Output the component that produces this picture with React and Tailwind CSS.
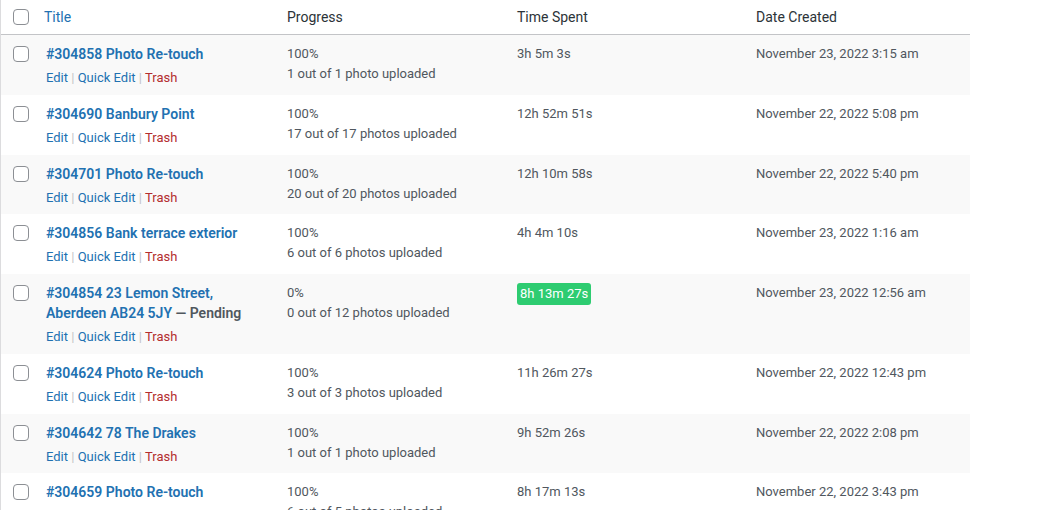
import React from 'react';

const rows = [
  { id: '#304858', title: 'Photo Re-touch', pct: '100%', photos: '1 out of 1 photo uploaded', time: '3h 5m 3s', date: 'November 23, 2022 3:15 am' },
  { id: '#304690', title: 'Banbury Point', pct: '100%', photos: '17 out of 17 photos uploaded', time: '12h 52m 51s', date: 'November 22, 2022 5:08 pm' },
  { id: '#304701', title: 'Photo Re-touch', pct: '100%', photos: '20 out of 20 photos uploaded', time: '12h 10m 58s', date: 'November 22, 2022 5:40 pm' },
  { id: '#304856', title: 'Bank terrace exterior', pct: '100%', photos: '6 out of 6 photos uploaded', time: '4h 4m 10s', date: 'November 23, 2022 1:16 am' },
  { id: '#304854', title: '23 Lemon Street, Aberdeen AB24 5JY', pending: true, pct: '0%', photos: '0 out of 12 photos uploaded', time: '8h 13m 27s', active: true, date: 'November 23, 2022 12:56 am' },
  { id: '#304624', title: 'Photo Re-touch', pct: '100%', photos: '3 out of 3 photos uploaded', time: '11h 26m 27s', date: 'November 22, 2022 12:43 pm' },
  { id: '#304642', title: '78 The Drakes', pct: '100%', photos: '1 out of 1 photo uploaded', time: '9h 52m 26s', date: 'November 22, 2022 2:08 pm' },
  { id: '#304659', title: 'Photo Re-touch', pct: '100%', photos: '6 out of 5 photos uploaded', time: '8h 17m 13s', date: 'November 22, 2022 3:43 pm' },
];

function Checkbox() {
  return <div className="w-4 h-4 rounded-[4px] border border-[#8c8f94] bg-white" />;
}

export default function App() {
  return (
    <div className="w-[1049px] h-[510px] overflow-hidden bg-white text-[13px] text-[#50575e]" style={{ fontFamily: 'Roboto, "Noto Sans", sans-serif' }}>
      <div className="w-[970px] border-l border-[#dcdcde]">
        {/* header */}
        <div className="flex h-[35px] border-b border-[#c3c4c7] text-[14px] leading-[20px] text-[#2c3338]">
          <div className="w-[33px] pl-[12px] pt-[9px]"><Checkbox /></div>
          <div className="w-[243px] px-[10px] pt-[7px] text-[#2271b1]">Title</div>
          <div className="w-[230px] px-[10px] pt-[7px]">Progress</div>
          <div className="w-[239px] px-[10px] pt-[7px]">Time Spent</div>
          <div className="w-[224px] px-[10px] pt-[7px]">Date Created</div>
        </div>

        {rows.map((r, i) => (
          <div key={r.id} className={`flex pt-[9px] pb-[7px] ${i % 2 === 0 ? 'bg-[#f9f9f9]' : 'bg-white'}`}>
            <div className="w-[33px] pl-[12px] pt-[2px]"><Checkbox /></div>
            <div className="w-[243px] pl-[12px] pr-[8px]">
              <div className="text-[14px] leading-[20px] font-semibold text-[#2271b1]">
                {r.id} {r.title}
                {r.pending && <span className="text-[#50575e]"> — Pending</span>}
              </div>
              <div className="pt-[5px] leading-[18.75px] text-[#2271b1]">
                Edit <span className="text-[#c3c4c7]">|</span> Quick Edit <span className="text-[#c3c4c7]">|</span> <span className="text-[#b32d2e]">Trash</span>
              </div>
            </div>
            <div className="w-[230px] px-[10px] leading-[20px]">
              <div>{r.pct}</div>
              <div>{r.photos}</div>
            </div>
            <div className="w-[239px] px-[10px] leading-[20px]">
              {r.active ? (
                <span className="inline-block px-[3px] rounded-[3px] bg-[#2ecc71] text-white leading-[22px]">{r.time}</span>
              ) : (
                r.time
              )}
            </div>
            <div className="w-[224px] px-[10px] leading-[20px]">{r.date}</div>
          </div>
        ))}
      </div>
    </div>
  );
}
